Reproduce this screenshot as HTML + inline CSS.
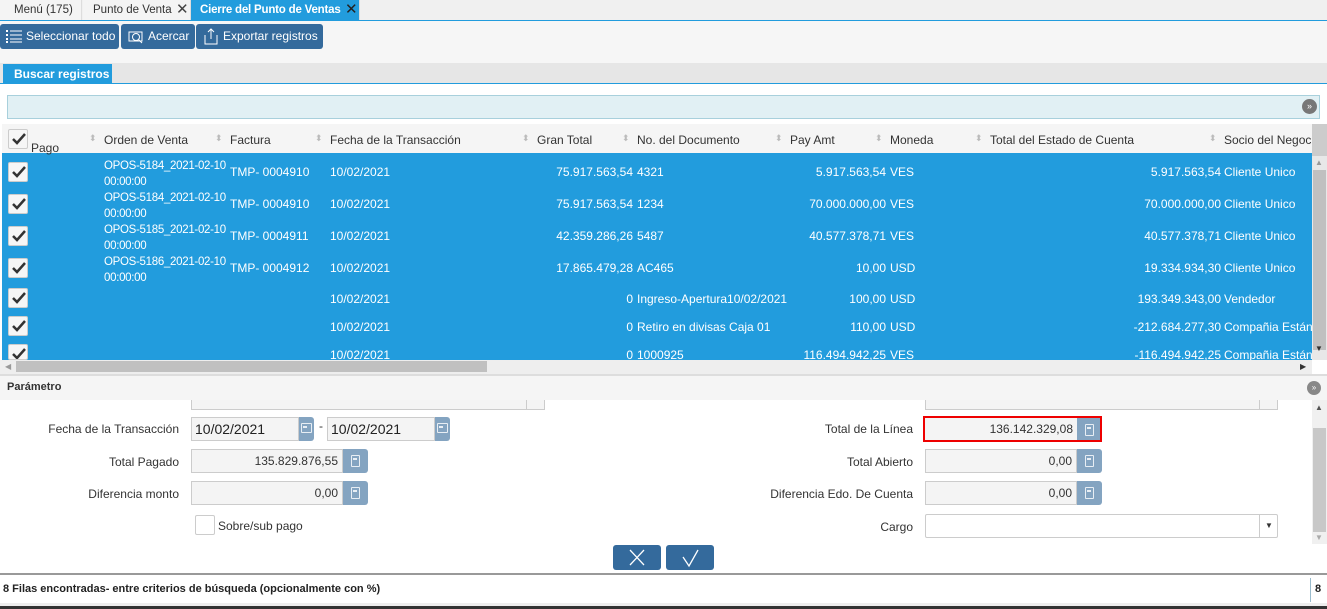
<!DOCTYPE html>
<html><head><meta charset="utf-8"><style>
*{box-sizing:border-box;margin:0;padding:0}
body{width:1327px;height:609px;overflow:hidden;background:#fff;font-family:"Liberation Sans",sans-serif;font-size:12px;color:#333;position:relative}
.a{position:absolute}
.tab{position:absolute;top:0;height:20px;line-height:20px;font-size:11.5px;background:#f4f4f4;border-right:1px solid #ddd;white-space:nowrap;overflow:hidden}
.btn{position:absolute;top:24px;height:25px;background:#346a9c;border-radius:3px;color:#fff;font-size:12px;line-height:25px;white-space:nowrap}
.cb{position:absolute;left:8px;width:20px;height:20px;background:#f6f6f6;border:1px solid #ccc;border-radius:2px}
.cb svg{position:absolute;left:2px;top:2px}
.row{position:absolute;left:2px;width:1310px;background:#229cdd;color:#fff}
.c{position:absolute;white-space:nowrap}
.r{text-align:right}
.hd{position:absolute;top:133px;color:#333;white-space:nowrap}
.arr{position:absolute;top:133px;color:#bbb;font-size:9px}
.lbl{position:absolute;text-align:right;font-size:12px;color:#333;white-space:nowrap}
.fld{position:absolute;height:24px;background:#f4f4f4;border:1px solid #ccc;text-align:right;padding-right:4px;line-height:22px;font-size:12px;color:#333}
.ib{position:absolute;width:25px;height:24px;background:#84a4c1;border-radius:0 3px 3px 0}
.ib i{position:absolute;left:8px;top:6px;width:9px;height:12px;border:1.5px solid #e8eef4;border-radius:1px}
.ib i:after{content:"";position:absolute;left:1px;top:2px;width:4px;height:2px;background:#e8eef4}
</style></head><body>
<div class="a" style="left:0;top:0;width:1327px;height:20px;background:#f0f0f0"></div>
<div class="tab" style="left:0;width:82px;padding-left:14px">Menú (175)</div>
<div class="tab" style="left:83px;width:108px;padding-left:10px">Punto de Venta</div>
<div class="a" style="left:176px;top:1px;font-size:15px;color:#444;line-height:18px">✕</div>
<div class="tab" style="left:191px;width:169px;background:#229cdd;color:#fff;font-weight:bold;padding-left:9px;letter-spacing:-0.2px">Cierre del Punto de Ventas</div>
<div class="a" style="left:345px;top:1px;font-size:15px;color:#222;line-height:18px">✕</div>
<div class="a" style="left:0;top:20px;width:1327px;height:1px;background:#229cdd"></div>
<div class="a" style="left:0;top:21px;width:1327px;height:42px;background:#f6f6f6"></div>
<div class="btn" style="left:0;width:119px;padding-left:26px">Seleccionar todo
<svg class="a" style="left:6px;top:6px" width="16" height="13"><g fill="#fff"><rect x="0" y="0" width="2" height="2"/><rect x="0" y="4" width="2" height="2"/><rect x="0" y="8" width="2" height="2"/><rect x="0" y="11" width="2" height="2"/><rect x="4" y="0.5" width="12" height="1"/><rect x="4" y="4.5" width="12" height="1"/><rect x="4" y="8.5" width="12" height="1"/><rect x="4" y="11.5" width="12" height="1"/></g></svg></div>
<div class="btn" style="left:121px;width:74px;padding-left:27px">Acercar
<svg class="a" style="left:7px;top:5px" width="16" height="15"><rect x="1" y="3" width="13" height="9" fill="none" stroke="#fff"/><circle cx="8" cy="8" r="3.5" fill="none" stroke="#fff"/><line x1="10.5" y1="10.5" x2="14" y2="14" stroke="#fff"/></svg></div>
<div class="btn" style="left:196px;width:127px;padding-left:27px">Exportar registros
<svg class="a" style="left:8px;top:4px" width="14" height="17"><path d="M1 7v9h12V7M7 1v10M4 4l3-3 3 3" fill="none" stroke="#fff"/></svg></div>
<div class="a" style="left:0;top:63px;width:1327px;height:21px;background:#e6e6e6;border-bottom:1px solid #229cdd"></div>
<div class="a" style="left:3px;top:64px;width:109px;height:20px;background:#229cdd;color:#fff;font-weight:bold;line-height:20px;padding-left:11px;white-space:nowrap">Buscar registros</div>
<div class="a" style="left:7px;top:95px;width:1313px;height:24px;background:#e1f0f4;border:1px solid #a8d0dc"></div>
<div class="a" style="left:1302px;top:99px;width:15px;height:15px;border-radius:50%;background:#777;color:#fff;font-size:9px;text-align:center;line-height:15px">»</div>
<div class="a" style="left:2px;top:124px;width:1310px;height:32px;background:#f5f5f5;border-bottom:3px solid #229cdd"></div>
<div class="a" style="left:1312px;top:124px;width:15px;height:236px;background:#e8e8e8"></div>
<div class="a" style="left:1312px;top:124px;width:15px;height:32px;background:#ccc"></div>
<div class="a" style="left:1313px;top:170px;width:13px;height:180px;background:#c0c0c0"></div>
<div class="cb" style="top:129px"><svg width="16" height="14"><path d="M2 7l4 4 8-9" fill="none" stroke="#333" stroke-width="2.5"/></svg></div>
<div class="hd" style="left:31px;top:141px">Pago</div>
<span class="arr" style="left:89px">⬍</span><div class="hd" style="left:104px">Orden de Venta</div>
<span class="arr" style="left:215px">⬍</span><div class="hd" style="left:230px">Factura</div>
<span class="arr" style="left:315px">⬍</span><div class="hd" style="left:330px">Fecha de la Transacción</div>
<span class="arr" style="left:522px">⬍</span><div class="hd" style="left:537px">Gran Total</div>
<span class="arr" style="left:622px">⬍</span><div class="hd" style="left:637px">No. del Documento</div>
<span class="arr" style="left:775px">⬍</span><div class="hd" style="left:790px">Pay Amt</div>
<span class="arr" style="left:875px">⬍</span><div class="hd" style="left:890px">Moneda</div>
<span class="arr" style="left:975px">⬍</span><div class="hd" style="left:990px">Total del Estado de Cuenta</div>
<span class="arr" style="left:1209px">⬍</span><div class="hd" style="left:1224px;width:88px;overflow:hidden">Socio del Negocio</div>
<div class="row" style="top:156px;height:204px"></div>
<div id="rows"></div>
<div class="a" style="left:0;top:360px;width:1312px;height:14px;background:#eee"></div>
<div class="a" style="left:16px;top:361px;width:471px;height:11px;background:#c0c0c0"></div>
<div class="a" style="left:5px;top:360px;color:#999;font-size:8px;line-height:14px">◀</div>
<div class="a" style="left:1300px;top:360px;color:#333;font-size:8px;line-height:14px">▶</div>
<div class="a" style="left:1315px;top:344px;color:#333;font-size:8px">▼</div>
<div class="a" style="left:1315px;top:158px;color:#999;font-size:8px">▲</div>
<div class="a" style="left:0;top:374px;width:1327px;height:2px;background:#ddd"></div>
<div class="a" style="left:0;top:376px;width:1327px;height:24px;background:#f5f5f5"></div>
<div class="a" style="left:7px;top:381px;font-weight:bold;font-size:11px;color:#333">Parámetro</div>
<div class="a" style="left:1307px;top:381px;width:14px;height:14px;border-radius:50%;background:#888;color:#fff;font-size:8px;text-align:center;line-height:14px">»</div>
<div class="a" style="left:191px;top:400px;width:354px;height:10px;border:1px solid #ccc;border-top:none;background:#f4f4f4"></div>
<div class="a" style="left:526px;top:400px;width:19px;height:10px;border-left:1px solid #ccc"></div>
<div class="a" style="left:925px;top:400px;width:353px;height:10px;border:1px solid #ccc;border-top:none;background:#f4f4f4"></div>
<div class="a" style="left:1259px;top:400px;width:19px;height:10px;border-left:1px solid #ccc"></div>
<div class="a" style="left:1312px;top:400px;width:15px;height:144px;background:#f0f0f0"></div>
<div class="a" style="left:1313px;top:428px;width:13px;height:104px;background:#c8c8c8"></div>
<div class="a" style="left:1315px;top:403px;color:#555;font-size:8px">▲</div>
<div class="a" style="left:1315px;top:533px;color:#aaa;font-size:8px">▼</div>

<div class="lbl" style="left:0;width:179px;top:422px">Fecha de la Transacción</div>
<div class="fld" style="left:191px;top:417px;width:108px;text-align:left;padding-left:3px;font-size:14px;color:#222">10/02/2021</div>
<div class="ib" style="left:299px;top:417px;width:15px"><i style="left:2px;width:11px;height:10px"></i></div>
<div class="a" style="left:319px;top:419px">-</div>
<div class="fld" style="left:327px;top:417px;width:108px;text-align:left;padding-left:3px;font-size:14px;color:#222">10/02/2021</div>
<div class="ib" style="left:435px;top:417px;width:15px"><i style="left:2px;width:11px;height:10px"></i></div>

<div class="lbl" style="left:0;width:179px;top:455px">Total Pagado</div>
<div class="fld" style="left:191px;top:449px;width:152px">135.829.876,55</div>
<div class="ib" style="left:343px;top:449px"><i></i></div>
<div class="lbl" style="left:0;width:179px;top:487px">Diferencia monto</div>
<div class="fld" style="left:191px;top:481px;width:152px">0,00</div>
<div class="ib" style="left:343px;top:481px"><i></i></div>
<div class="a" style="left:195px;top:515px;width:20px;height:20px;border:1px solid #ccc;border-radius:2px"></div>
<div class="a" style="left:218px;top:519px">Sobre/sub pago</div>

<div class="lbl" style="left:700px;width:213px;top:422px">Total de la Línea</div>
<div class="a" style="left:923px;top:416px;width:179px;height:26px;border:2px solid #e00"></div>
<div class="fld" style="left:925px;top:418px;width:152px;height:22px;border:none;line-height:22px">136.142.329,08</div>
<div class="ib" style="left:1077px;top:418px;width:23px;height:22px;border-radius:0"><i></i></div>
<div class="lbl" style="left:700px;width:213px;top:455px">Total Abierto</div>
<div class="fld" style="left:925px;top:449px;width:152px">0,00</div>
<div class="ib" style="left:1077px;top:449px"><i></i></div>
<div class="lbl" style="left:700px;width:213px;top:487px">Diferencia Edo. De Cuenta</div>
<div class="fld" style="left:925px;top:481px;width:152px">0,00</div>
<div class="ib" style="left:1077px;top:481px"><i></i></div>
<div class="lbl" style="left:700px;width:213px;top:520px">Cargo</div>
<div class="a" style="left:925px;top:514px;width:353px;height:24px;border:1px solid #ccc;border-radius:2px;background:#fff"></div>
<div class="a" style="left:1259px;top:514px;width:19px;height:24px;border-left:1px solid #ccc;font-size:8px;text-align:center;line-height:24px">▼</div>

<div class="a" style="left:613px;top:545px;width:48px;height:25px;background:#346a9c;border-radius:3px"><svg width="48" height="25"><path d="M17 5l14 15M31 5L17 20" stroke="#fff" stroke-width="1.3"/></svg></div>
<div class="a" style="left:666px;top:545px;width:48px;height:25px;background:#346a9c;border-radius:3px"><svg width="48" height="25"><path d="M17 12l6 9 9-16" fill="none" stroke="#fff" stroke-width="1.3"/></svg></div>
<div class="a" style="left:0;top:573px;width:1327px;height:2px;background:#999"></div>
<div class="a" style="left:3px;top:583px;font-size:11px;font-weight:bold;color:#222">8 Filas encontradas- entre criterios de búsqueda (opcionalmente con %)</div>
<div class="a" style="left:1310px;top:578px;width:1px;height:24px;background:#9bc"></div>
<div class="a" style="left:1315px;top:583px;font-size:11px;font-weight:bold;color:#222">8</div>
<div class="a" style="left:0;top:603px;width:1327px;height:3px;background:#eee"></div>
<div class="a" style="left:0;top:606px;width:1327px;height:3px;background:#333"></div>
<script>
var R=[[156,"OPOS-5184_2021-02-10","TMP- 0004910","75.917.563,54","4321","5.917.563,54","VES","5.917.563,54","Cliente Unico"],
[188,"OPOS-5184_2021-02-10","TMP- 0004910","75.917.563,54","1234","70.000.000,00","VES","70.000.000,00","Cliente Unico"],
[220,"OPOS-5185_2021-02-10","TMP- 0004911","42.359.286,26","5487","40.577.378,71","VES","40.577.378,71","Cliente Unico"],
[252,"OPOS-5186_2021-02-10","TMP- 0004912","17.865.479,28","AC465","10,00","USD","19.334.934,30","Cliente Unico"],
[284,"","","0","Ingreso-Apertura10/02/2021","100,00","USD","193.349.343,00","Vendedor"],
[312,"","","0","Retiro en divisas Caja 01","110,00","USD","-212.684.277,30","Compañia Estándar"],
[340,"","","0","1000925","116.494.942,25","VES","-116.494.942,25","Compañia Estándar"]];
var h="";
R.forEach(function(r,i){var y=r[0];var ck=i<4?y+6:y+4;
if(ck<360){h+='<div class="cb" style="top:'+ck+'px;'+(ck+20>360?'height:'+(360-ck)+'px;overflow:hidden;':'')+'"><svg width="16" height="14"><path d="M2 7l4 4 8-9" fill="none" stroke="#333" stroke-width="2.5"/></svg></div>';}
var ty=i<4?y+9:y+8;
if(r[1])h+='<div class="c" style="left:104px;top:'+(y+2)+'px;color:#fff;line-height:16px;font-size:11.5px;letter-spacing:-0.3px">'+r[1]+'<br>00:00:00</div>';
h+='<div class="c" style="left:230px;top:'+ty+'px;color:#fff">'+r[2]+'</div>';
h+='<div class="c" style="left:330px;top:'+ty+'px;color:#fff">10/02/2021</div>';
h+='<div class="c r" style="left:533px;width:100px;top:'+ty+'px;color:#fff">'+r[3]+'</div>';
h+='<div class="c" style="left:637px;top:'+ty+'px;color:#fff">'+r[4]+'</div>';
h+='<div class="c r" style="left:786px;width:100px;top:'+ty+'px;color:#fff">'+r[5]+'</div>';
h+='<div class="c" style="left:890px;top:'+ty+'px;color:#fff">'+r[6]+'</div>';
h+='<div class="c r" style="left:1071px;width:150px;top:'+ty+'px;color:#fff">'+r[7]+'</div>';
h+='<div class="c" style="left:1224px;top:'+ty+'px;color:#fff;width:88px;overflow:hidden">'+r[8]+'</div>';});
document.getElementById("rows").innerHTML='<div class="a" style="left:0;top:0;width:1312px;height:360px;overflow:hidden">'+h+'</div>';
</script>
</body></html>
